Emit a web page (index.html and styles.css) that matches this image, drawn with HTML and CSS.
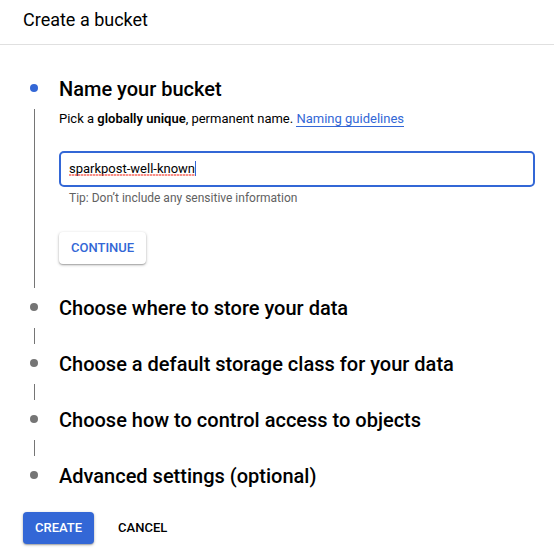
FILE: index.html
```html
<!DOCTYPE html>
<html lang="en">
<head>
<meta charset="utf-8">
<meta name="viewport" content="width=device-width, initial-scale=1">
<title>Create a bucket</title>
<link rel="stylesheet" href="styles.css">
</head>
<body>
<header class="header"><h1 class="title">Create a bucket</h1></header>
<main class="main">
  <form class="form">
    <ol class="steps">
      <li class="step active">
        <div class="rail"><span class="dot"></span><span class="line"></span></div>
        <div class="content">
          <h2 class="heading"><label for="bucket-name">Name your bucket</label></h2>
          <p class="intro">Pick a <b>globally unique</b>, permanent name. <a class="link" href="#">Naming guidelines</a></p>
          <div class="field">
            <input class="input" id="bucket-name" type="text" value="sparkpost-well-known" aria-describedby="bucket-tip" spellcheck="false">
            <span class="spelling"></span>
          </div>
          <p class="tip" id="bucket-tip">Tip: Don’t include any sensitive information</p>
          <button class="button raised" type="button">CONTINUE</button>
        </div>
      </li>
      <li class="step">
        <div class="rail"><span class="dot"></span><span class="line"></span></div>
        <h2 class="heading">Choose where to store your data</h2>
      </li>
      <li class="step">
        <div class="rail"><span class="dot"></span><span class="line"></span></div>
        <h2 class="heading">Choose a default storage class for your data</h2>
      </li>
      <li class="step">
        <div class="rail"><span class="dot"></span><span class="line"></span></div>
        <h2 class="heading">Choose how to control access to objects</h2>
      </li>
      <li class="step">
        <div class="rail"><span class="dot"></span></div>
        <h2 class="heading">Advanced settings (optional)</h2>
      </li>
    </ol>
    <div class="actions">
      <button class="button primary" type="button">CREATE</button>
      <button class="button" type="button">CANCEL</button>
    </div>
  </form>
</main>
</body>
</html>
```
FILE: styles.css
```css
:root {
  --blue: #3367d6;
  --gray: #757575;
}

* {
  box-sizing: border-box;
}

body {
  margin: 0;
  background: #fff;
  color: #000;
  font: 13px/20px Roboto, sans-serif;
}

.header {
  padding: 8px 23px 12px;
  border-bottom: 1px solid #e0e0e0;
}

.title {
  margin: 0;
  font-size: 18px;
  font-weight: 400;
  line-height: 24px;
}

.main {
  padding: 28px 19px 12px 23px;
}

.steps {
  margin: 0;
  padding: 0;
  list-style: none;
}

.step {
  display: grid;
  grid-template-columns: 22px 1fr;
  column-gap: 14px;
  min-height: 56px;
}

.step:last-child {
  min-height: 32px;
}

.rail {
  display: flex;
  flex-direction: column;
  align-items: center;
  padding: 11px 0 4px;
}

.dot {
  width: 8px;
  height: 8px;
  border-radius: 50%;
  background: var(--gray);
}

.active .dot {
  background: var(--blue);
}

.line {
  flex: 1;
  width: 1px;
  margin-top: 17px;
  background: var(--gray);
}

.content {
  padding-bottom: 28px;
}

.heading {
  margin: 0;
  font-size: 20px;
  font-weight: 500;
  line-height: 32px;
}

.intro {
  margin: 4px 0 22px;
}

.intro b {
  font-weight: 600;
}

.link {
  display: inline-block;
  height: 18px;
  border-bottom: 1px solid var(--blue);
  color: var(--blue);
  text-decoration: none;
}

.field {
  position: relative;
}

.input {
  display: block;
  width: 100%;
  height: 36px;
  padding: 0 8px 2px;
  border: 2px solid var(--blue);
  border-radius: 5px;
  outline: none;
  background: #fff;
  color: #000;
  font: inherit;
}

/* Spelling underline with the caret at its right end */
.spelling {
  position: absolute;
  top: 10px;
  left: 10px;
  width: 127px;
  height: 15px;
  border-right: 1px solid var(--blue);
  background: radial-gradient(circle at 1px 1px, #f4433699 1px, transparent 2px) 0 100% / 3px 2px repeat-x;
  pointer-events: none;
}

.tip {
  margin: 3px 0 26px 10px;
  color: #616161;
  font-size: 12px;
  line-height: 16px;
}

.button {
  height: 32px;
  padding: 0 12px;
  border: 0;
  border-radius: 4px;
  background: #fff;
  color: #000;
  font: 500 13px/32px Roboto, sans-serif;
  cursor: pointer;
}

.raised,
.primary {
  box-shadow: 0 1px 3px rgba(0, 0, 0, .3), 0 1px 1px rgba(0, 0, 0, .15);
}

.raised {
  display: block;
  color: var(--blue);
}

.primary {
  background: var(--blue);
  color: #fff;
}

.actions {
  display: flex;
  gap: 12px;
  margin-top: 20px;
}
```
